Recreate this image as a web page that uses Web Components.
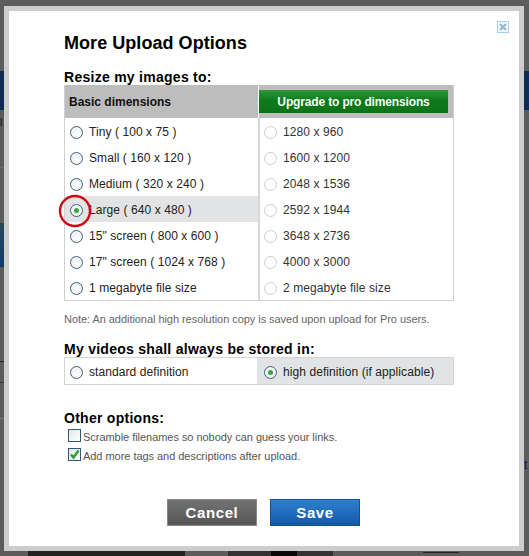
<!DOCTYPE html>
<html><head><meta charset="utf-8">
<style>
html,body{margin:0;padding:0;width:529px;height:556px;overflow:hidden;background:#5c5c5c}
</style></head><body>
<backdrop-page></backdrop-page>
<upload-dialog></upload-dialog>
<template id="radio-t"><style>
:host{display:flex;align-items:center;box-sizing:border-box;height:26px;padding:2px 0 0 5px;gap:6px;color:#222;font:12px/1 "Liberation Sans",sans-serif;letter-spacing:.08px;white-space:nowrap}
:host([sel]){background:#e1e3e4}
:host([faint]){color:#333;padding-left:4px}
i{display:block;width:13px;height:13px;box-sizing:border-box;flex:none;margin-top:1px;border-radius:50%;border:1.2px solid #3f5f7c;background:radial-gradient(circle at 60% 65%,#fff,#e6e8ec);position:relative}
:host([faint]) i{border-color:#ccc;background:#fff}
:host([sel]) i{background:#f2f4f4}
:host([sel]) i::after{content:"";position:absolute;left:2.8px;top:2.8px;width:5px;height:5px;border-radius:50%;background:#3aa545}
</style><i></i><span><slot></slot></span></template>
<script>
function def(name,html){customElements.define(name,class extends HTMLElement{constructor(){super();this.attachShadow({mode:'open'}).innerHTML=html;}});}
customElements.define('radio-row',class extends HTMLElement{constructor(){super();this.attachShadow({mode:'open'}).append(document.getElementById('radio-t').content.cloneNode(true));}});
def('h-title','<style>:host{display:block;font:bold 18px/1 "Liberation Sans",sans-serif;color:#000;letter-spacing:.05px}</style><slot></slot>');
def('section-head','<style>:host{display:block;font:bold 14px/1 "Liberation Sans",sans-serif;color:#000;letter-spacing:.27px}</style><slot></slot>');
def('check-row',`<style>:host{display:flex;align-items:center;gap:2px;height:19px;font:11px/1 "Liberation Sans",sans-serif;letter-spacing:-.04px;color:#555;white-space:nowrap}
b{display:block;flex:none;box-sizing:border-box;width:13px;height:13px;border:1px solid #35566f;background:linear-gradient(135deg,#e4e6e8,#fff)}
span{margin-top:4px}
svg{display:none;width:11px;height:11px}
:host([on]) svg{display:block}</style><b><svg viewBox="0 0 11 11"><path d="M2 5.5L4.5 8.5L9.5 1.5" fill="none" stroke="#2f9a36" stroke-width="2.4"/></svg></b><span><slot></slot></span>`);
def('push-button',`<style>:host{display:flex;align-items:center;justify-content:center;box-sizing:border-box;width:90px;height:27px;font:bold 15px/1 "Liberation Sans",sans-serif;color:#fff;letter-spacing:.6px;background:linear-gradient(#737373,#555);border:1px solid #8a8a8a}
:host([primary]){background:linear-gradient(#2f80cf,#1459a8);border-color:#12528f}</style><slot></slot>`);
def('backdrop-page',`<style>:host{display:block;position:absolute;inset:0;background:#5c5c5c;overflow:hidden}
div{position:absolute}
span{position:absolute;font:11px/1 "Liberation Sans",sans-serif;color:#111}</style>
<div style="left:0;top:71px;width:5px;height:39px;background:#0e2a55"></div>
<div style="left:0;top:223px;width:5px;height:44px;background:linear-gradient(#234a5c,#123a6a)"></div>
<div style="left:0;top:167px;width:5px;height:1px;background:#6a6a6a"></div>
<div style="left:0;top:361px;width:5px;height:1px;background:#222"></div>
<div style="left:0;top:382px;width:5px;height:1px;background:#333"></div>
<div style="left:0;top:418px;width:5px;height:1px;background:#777"></div>
<span style="left:0;top:117px">l</span>
<span style="left:524px;top:459px;color:#12125a;font-size:12px">t</span>
<div style="left:524px;top:71px;width:5px;height:39px;background:#0e2a55"></div>
<div style="left:28px;top:551px;width:157px;height:5px;background:#222"></div>
<div style="left:228px;top:551px;width:105px;height:5px;background:#333"></div>
<div style="left:271px;top:551px;width:26px;height:5px;background:#0a0a0a"></div>
<div style="left:423px;top:552px;width:36px;height:1px;background:#222"></div>`);
def('upload-dialog',`<style>
:host{display:block;position:absolute;left:4px;top:6px;width:520px;height:545px;box-sizing:border-box;border:5px solid #cdcdcd;background:#fff;font-family:"Liberation Sans",sans-serif}
.wrap{display:flex;flex-direction:column;padding:23px 65px 0 55px;position:relative;height:100%;box-sizing:border-box}
.x{position:absolute;right:10px;top:10px;width:10px;height:10px;border:1px solid #a9cfe0;background:#f2f8fb}
.x svg{display:block;width:10px;height:10px}
.t{display:grid;grid-template-columns:193px 1fr;width:390px;box-sizing:border-box;border:1px solid #d0d0d0;border-top:0}
.hd{height:33px;box-sizing:border-box;display:flex;align-items:center;background:#bdbdbd;font:bold 12px/1 "Liberation Sans",sans-serif;color:#111;padding-left:4px}
.hd.r{justify-content:center;border-left:1px solid #fff;padding:5px 5px 5px 0}
.up{display:flex;align-items:center;justify-content:center;width:100%;height:23px;background:linear-gradient(#2c9a39 0,#0e7a1c 45%,#0b7317);color:#f2fff2;font:bold 12px/1 "Liberation Sans",sans-serif;letter-spacing:-.15px}
.c.r{border-left:2px solid #d6d6d6}
.vt{display:grid;grid-template-columns:192px 1fr;width:390px;box-sizing:border-box;border:1px solid #d4d4d4;height:28px;margin-top:1px}
.vt radio-row[sel]{padding-left:7px}
.note{font:11px/1 "Liberation Sans",sans-serif;letter-spacing:-.05px;color:#666;margin-top:13px;white-space:nowrap}
</style>
<div class="wrap">
<div class="x"><svg viewBox="0 0 10 10"><path d="M2 2L8 8M8 2L2 8" stroke="#8fb7cf" stroke-width="2"/></svg></div>
<h-title>More Upload Options</h-title>
<section-head style="margin-top:18px;margin-bottom:1px">Resize my images to:</section-head>
<div class="t">
 <div class="hd">Basic dimensions</div>
 <div class="hd r"><div class="up">Upgrade to pro dimensions</div></div>
 <div class="c">
  <radio-row>Tiny ( 100 x 75 )</radio-row><radio-row>Small ( 160 x 120 )</radio-row><radio-row>Medium ( 320 x 240 )</radio-row><radio-row sel>Large ( 640 x 480 )</radio-row><radio-row>15" screen ( 800 x 600 )</radio-row><radio-row>17" screen ( 1024 x 768 )</radio-row><radio-row>1 megabyte file size</radio-row>
 </div>
 <div class="c r">
  <radio-row faint>1280 x 960</radio-row><radio-row faint>1600 x 1200</radio-row><radio-row faint>2048 x 1536</radio-row><radio-row faint>2592 x 1944</radio-row><radio-row faint>3648 x 2736</radio-row><radio-row faint>4000 x 3000</radio-row><radio-row faint>2 megabyte file size</radio-row>
 </div>
</div>
<div class="note">Note: An additional high resolution copy is saved upon upload for Pro users.</div>
<section-head style="margin-top:17px">My videos shall always be stored in:</section-head>
<div class="vt"><radio-row>standard definition</radio-row><radio-row sel>high definition (if applicable)</radio-row></div>
<section-head style="margin-top:26px;margin-bottom:1px">Other options:</section-head>
<check-row style="margin-left:4px">Scramble filenames so nobody can guess your links.</check-row>
<check-row on style="margin-left:4px">Add more tags and descriptions after upload.</check-row>
<div style="display:flex;gap:13px;margin:35px 0 0 103px"><push-button>Cancel</push-button><push-button primary>Save</push-button></div>
</div>
<svg style="position:absolute;left:48.5px;top:183px;overflow:visible" width="34" height="34" viewBox="0 0 34 34"><circle cx="17" cy="17" r="15" fill="none" stroke="#cf0a14" stroke-width="2.4"/></svg>`);
</script>
</body></html>
